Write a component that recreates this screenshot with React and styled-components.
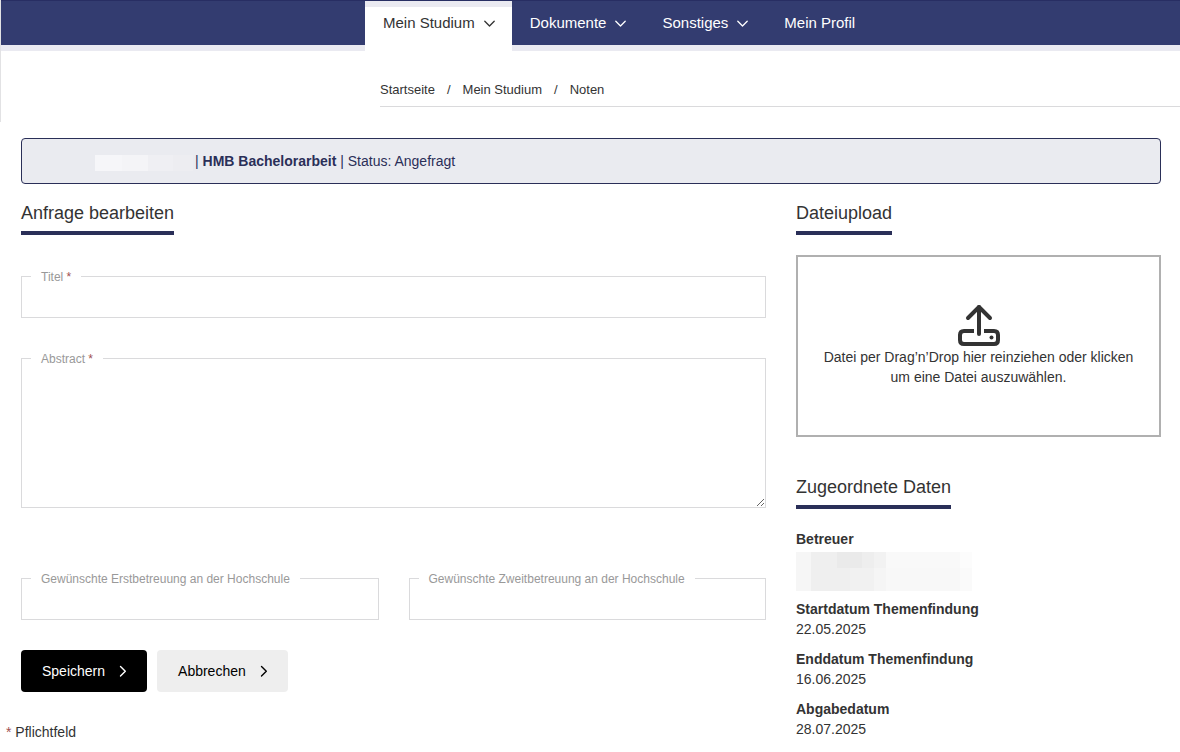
import React, { useRef, useState } from 'react'
import { styled, createGlobalStyle } from 'styled-components'

const NAV_ITEMS = [
    { label: "Mein Studium", active: true, menu: true },
    { label: "Dokumente", menu: true },
    { label: "Sonstiges", menu: true },
    { label: "Mein Profil" },
]

const BREADCRUMBS = ["Startseite", "Mein Studium", "Noten"]

const DATES = [
    { label: "Startdatum Themenfindung", value: "22.05.2025" },
    { label: "Enddatum Themenfindung", value: "16.06.2025" },
    { label: "Abgabedatum", value: "28.07.2025" },
]

function ChevronDown() {
    return (
        <svg width="11" height="8" viewBox="0 0 11 8" fill="none" stroke="currentColor" strokeWidth="1.3" strokeLinecap="round" strokeLinejoin="round" aria-hidden="true">
            <path d="M0.8 2.2 L5.5 7 L10.2 2.2" />
        </svg>
    )
}

function ChevronRight() {
    return (
        <svg width="8" height="12" viewBox="0 0 8 12" fill="none" stroke="currentColor" strokeWidth="1.4" strokeLinecap="round" strokeLinejoin="round" aria-hidden="true">
            <path d="M1.5 1.4 L6.3 6.2 L1.5 11" />
        </svg>
    )
}

function UploadIcon() {
    return (
        <svg width="44" height="44" viewBox="0 0 44 44" fill="none" stroke="currentColor" strokeWidth="4" strokeLinecap="round" strokeLinejoin="round" aria-hidden="true">
            <path d="M22 31 V4" />
            <path d="M11 15 L22 4 L33 15" />
            <path d="M17 28 H7 Q3 28 3 32 V37 Q3 41 7 41 H37 Q41 41 41 37 V32 Q41 28 37 28 H27" strokeLinecap="butt" />
            <circle cx="34.5" cy="34.5" r="2" fill="currentColor" stroke="none" />
        </svg>
    )
}

function Field({ id, label, required, area }) {
    return (
        <StField>
            <StLabel htmlFor={id}>
                {label}{required && <StStar> *</StStar>}
            </StLabel>
            {area ? <StTextarea id={id} required={required} /> : <StInput id={id} type="text" required={required} />}
        </StField>
    )
}

function App() {
    const [fileName, setFileName] = useState("");
    const fileInputRef = useRef(null);

    // 드롭한 파일 처리
    const handleDrop = (e) => {
        e.preventDefault();
        const file = e.dataTransfer.files[0];
        if (file) {
            setFileName(file.name);
        }
    }

    // 파일 선택 처리
    const handleFile = (e) => {
        const file = e.target.files[0];
        setFileName(file ? file.name : "");
    }

    return (
        <>
            <GlobalStyle />
            <StHeader>
                <StNav>
                    {NAV_ITEMS.map(({ label, active, menu }) => (
                        <StNavLink key={label} href="#" $active={active}>
                            {label}
                            {menu && <ChevronDown />}
                        </StNavLink>
                    ))}
                </StNav>
                <StBreadcrumb aria-label="Breadcrumb">
                    {BREADCRUMBS.map((crumb) => (
                        <StCrumb key={crumb}>
                            <a href="#">{crumb}</a>
                        </StCrumb>
                    ))}
                </StBreadcrumb>
            </StHeader>
            <StMain>
                <StAlert>
                    <StHiddenName />
                    <span>| <b>HMB Bachelorarbeit</b> | Status: Angefragt</span>
                </StAlert>
                <StColumns>
                    <section>
                        <StTitle>Anfrage bearbeiten</StTitle>
                        <StForm onSubmit={(e) => e.preventDefault()}>
                            <Field id="titel" label="Titel" required />
                            <Field id="abstract" label="Abstract" required area />
                            <StFieldRow>
                                <Field id="erst" label="Gewünschte Erstbetreuung an der Hochschule" />
                                <Field id="zweit" label="Gewünschte Zweitbetreuung an der Hochschule" />
                            </StFieldRow>
                            <StButtons>
                                <StButton type="submit" $primary>Speichern <ChevronRight /></StButton>
                                <StButton type="button">Abbrechen <ChevronRight /></StButton>
                            </StButtons>
                        </StForm>
                        <StNote><StStar>*</StStar> Pflichtfeld</StNote>
                    </section>
                    <aside>
                        <StTitle>Dateiupload</StTitle>
                        <StDropZone
                            type="button"
                            onClick={() => fileInputRef.current.click()}
                            onDragOver={(e) => e.preventDefault()}
                            onDrop={handleDrop}
                        >
                            <UploadIcon />
                            {fileName || "Datei per Drag’n’Drop hier reinziehen oder klicken um eine Datei auszuwählen."}
                        </StDropZone>
                        <input ref={fileInputRef} type="file" hidden onChange={handleFile} aria-label="Dateiupload" />
                        <StTitle>Zugeordnete Daten</StTitle>
                        <StData>
                            <dt>Betreuer</dt>
                            <StHiddenPerson />
                            {DATES.map(({ label, value }) => (
                                <React.Fragment key={label}>
                                    <dt>{label}</dt>
                                    <dd>{value}</dd>
                                </React.Fragment>
                            ))}
                        </StData>
                    </aside>
                </StColumns>
            </StMain>
        </>
    )
}

export default App

const GlobalStyle = createGlobalStyle`
    * {
        box-sizing: border-box;
    }

    body {
        margin: 0;
        background-color: #FFFFFF;
        color: #333333;
        font-family: "Liberation Sans", Arial, sans-serif;
        font-size: 14px;
        line-height: 20px;
    }

    a {
        color: inherit;
        text-decoration: none;
    }

    input, textarea, button {
        font: inherit;
        color: inherit;
    }
`

const StHeader = styled.header`
    height: 122px;
    border-left: 1px solid #E2E2E4;
`

const StNav = styled.nav`
    display: flex;
    height: 51px;
    padding-left: 364px;
    background-color: #333C70;
    border-top: 1px solid #282E63;
    border-bottom: 6px solid #EAEAF1;
`

const StNavLink = styled.a`
    display: flex;
    align-items: center;
    gap: 9px;
    height: ${({ $active }) => $active ? "50px" : "44px"};
    padding: ${({ $active }) => $active ? "0 17px 6px 18px" : "0 18px"};
    font-size: 15px;
    color: ${({ $active }) => $active ? "#333333" : "#FFFFFF"};
    background-color: ${({ $active }) => $active ? "#FFFFFF" : "transparent"};
    box-shadow: ${({ $active }) => $active ? "inset 0 6px #EAEAF1" : "none"};
`

const StBreadcrumb = styled.nav`
    display: flex;
    margin-left: 379px;
    padding: 29px 0 6px;
    border-bottom: 1px solid #DADADC;
    font-size: 13px;
`

const StCrumb = styled.span`
    & + &::before {
        content: "/";
        padding: 0 12px;
    }
`

const StMain = styled.main`
    padding: 16px 19px 0 21px;
`

const StAlert = styled.div`
    display: flex;
    align-items: center;
    gap: 2px;
    height: 46px;
    padding-left: 73px;
    border: 1px solid #2A2F58;
    border-radius: 4px;
    background-color: #EAEBF0;
    color: #2A2F58;
`

const StHiddenName = styled.span`
    width: 98px;
    height: 16px;
    margin-top: 4px;
    background: linear-gradient(90deg, #F6F6F9 0 28%, #F4F4F7 28% 54%, #EFEFF3 54% 80%, #EDEDF1 80%);
`

const StColumns = styled.div`
    display: grid;
    grid-template-columns: 149fr 73fr;
    gap: 30px;
    padding-top: 16px;
`

const StTitle = styled.h2`
    width: fit-content;
    margin: 0 0 20px;
    padding-bottom: 5px;
    border-bottom: 4px solid #2A2F58;
    font-size: 18px;
    line-height: 26px;
    font-weight: 400;
`

const StForm = styled.form`
    display: flex;
    flex-direction: column;
    gap: 40px;
    padding-top: 21px;
`

const StField = styled.div`
    position: relative;
    display: flex;
    flex: 1;
`

const StLabel = styled.label`
    position: absolute;
    top: -7px;
    left: 10px;
    padding: 0 10px;
    background-color: #FFFFFF;
    font-size: 12px;
    line-height: 16px;
    color: #999999;
    white-space: nowrap;
`

const StStar = styled.span`
    color: #A0504F;
`

const StInput = styled.input`
    width: 100%;
    height: 42px;
    padding: 0 20px;
    border: 1px solid #DADADC;
    outline: none;
`

const StTextarea = styled.textarea`
    width: 100%;
    height: 150px;
    padding: 16px 20px;
    border: 1px solid #DADADC;
    outline: none;
    resize: vertical;
`

const StFieldRow = styled.div`
    display: flex;
    gap: 30px;
    padding-top: 30px;
`

const StButtons = styled.div`
    display: flex;
    gap: 10px;
    margin-top: -10px;
`

const StButton = styled.button`
    display: flex;
    align-items: center;
    gap: 14px;
    height: 42px;
    padding: 0 20px 0 21px;
    border: none;
    border-radius: 4px;
    background-color: ${({ $primary }) => $primary ? "#000000" : "#EEEEEE"};
    color: ${({ $primary }) => $primary ? "#FFFFFF" : "#000000"};
    cursor: pointer;
`

const StNote = styled.p`
    margin: 30px 0 0 -15px;
`

const StDropZone = styled.button`
    display: flex;
    flex-direction: column;
    align-items: center;
    justify-content: center;
    width: 100%;
    height: 182px;
    margin-bottom: 37px;
    padding: 0 20px 2px;
    border: 2px solid #B0B0B0;
    background-color: #FFFFFF;
    cursor: pointer;
`

const StData = styled.dl`
    margin: 0;

    dt {
        font-weight: 700;
    }

    dd {
        margin: 0 0 10px;
    }

    dd:last-child {
        margin-bottom: 0;
    }
`

const StHiddenPerson = styled.dd`
    && {
        width: 176px;
        height: 39px;
        margin: 3px 0 8px;
    }
    background:
        linear-gradient(90deg, #F6F6F6 0 15px, #EFEFEF 15px 41px, #EAEAEA 41px 66px, #EEEEEE 66px 78px, #F2F2F2 78px 90px, #F9F9F9 90px 164px, #FCFCFC 164px) top / 100% 16px no-repeat,
        linear-gradient(90deg, #F6F6F6 0 15px, #EFEFEF 15px 54px, #F1F1F1 54px 78px, #F5F5F5 78px 90px, #F8F8F8 90px 164px, #FAFAFA 164px) bottom / 100% 23px no-repeat;
`
